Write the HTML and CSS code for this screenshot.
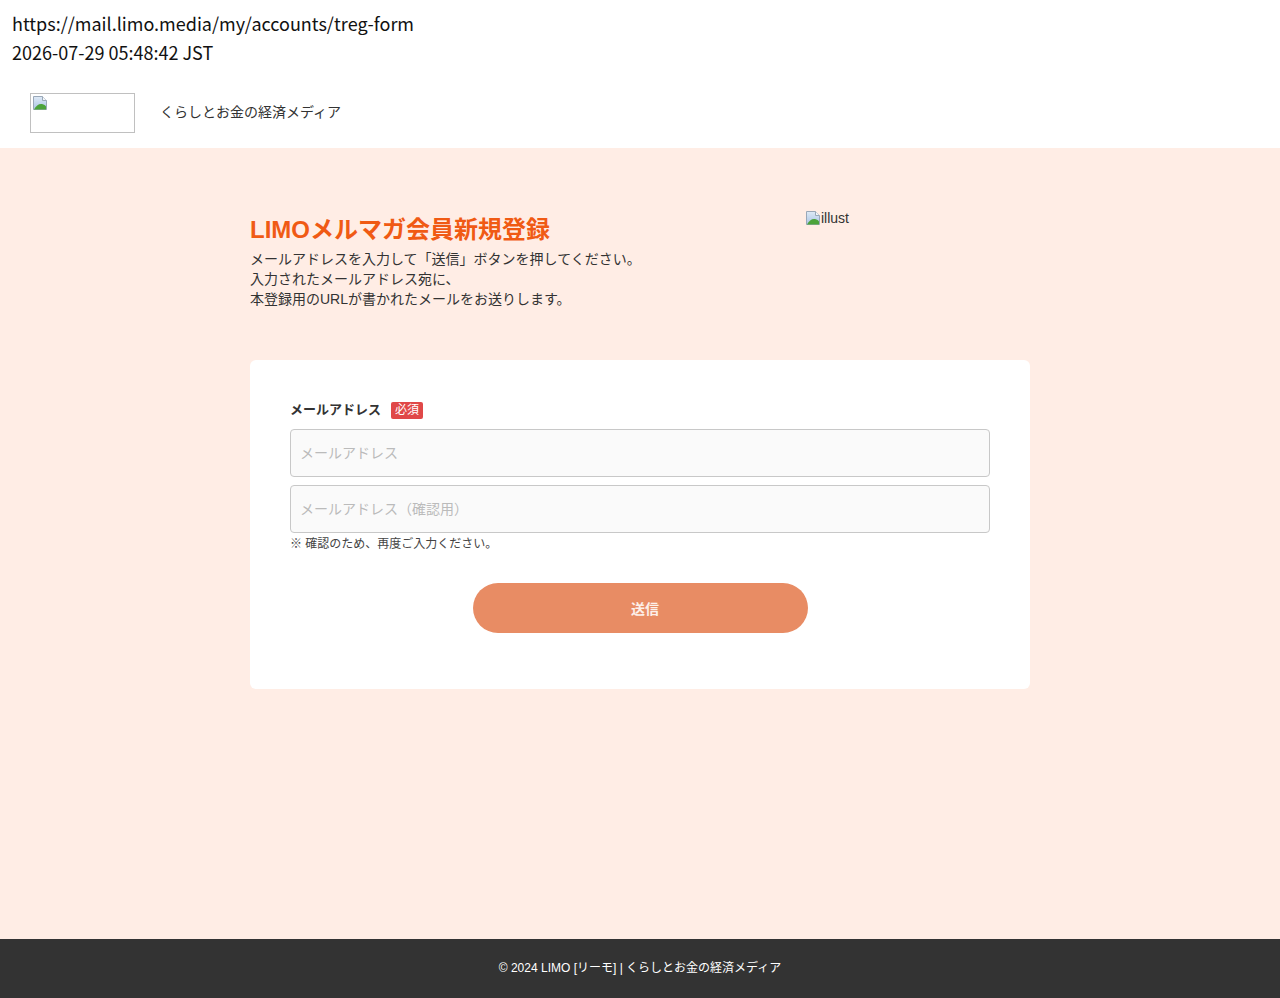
FILE: index.html
```html
<!DOCTYPE html>
<html lang="ja">
<head>
    <meta charset="UTF-8">
    <meta name="viewport" content="width=device-width, initial-scale=1.0">
    <title>LIMOメルマガ会員新規登録</title>
    <link rel="stylesheet" href="styles.css">
</head>
<body>
    <div class="capture-info">
        <div>https://mail.limo.media/my/accounts/treg-form</div>
        <div>2026-07-29 05:48:42 JST</div>
    </div>

    <header class="site-header">
        <div class="logo-box">
            <svg class="broken-img" width="16" height="16" viewBox="0 0 16 16">
                <defs>
                    <linearGradient id="sky" x1="0" y1="0" x2="0" y2="1">
                        <stop offset="0" stop-color="#dfeaf6"/>
                        <stop offset="1" stop-color="#a9c4e4"/>
                    </linearGradient>
                </defs>
                <path d="M1.5 1.5h9l4 4v9h-13z" fill="url(#sky)" stroke="#9aa8b8"/>
                <path d="M10.5 1.5v4h4" fill="#f4f6f8" stroke="#9aa8b8"/>
                <path d="M2 14.5c2-4 5-6 8-5.5 2 .3 3.5 1.5 4 2.5v3z" fill="#4ca33a"/>
            </svg>
        </div>
        <span class="tagline">くらしとお金の経済メディア</span>
    </header>

    <main class="main">
        <div class="container">
            <div class="intro">
                <div class="intro-text">
                    <h1 class="page-title">LIMOメルマガ会員新規登録</h1>
                    <p class="lead">メールアドレスを入力して「送信」ボタンを押してください。<br>入力されたメールアドレス宛に、<br>本登録用のURLが書かれたメールをお送りします。</p>
                </div>
                <div class="illust">
                    <svg class="broken-img" width="16" height="16" viewBox="0 0 16 16">
                        <path d="M1.5 1.5h9l4 4v9h-13z" fill="url(#sky)" stroke="#9aa8b8"/>
                        <path d="M10.5 1.5v4h4" fill="#f4f6f8" stroke="#9aa8b8"/>
                        <path d="M2 14.5c2-4 5-6 8-5.5 2 .3 3.5 1.5 4 2.5v3z" fill="#4ca33a"/>
                    </svg>
                    <span>illust</span>
                </div>
            </div>

            <form class="form-card" onsubmit="return false;">
                <div class="field-label">
                    メールアドレス
                    <span class="required">必須</span>
                </div>
                <input type="text" class="text-input" placeholder="メールアドレス">
                <input type="text" class="text-input" placeholder="メールアドレス（確認用）">
                <p class="note">※ 確認のため、再度ご入力ください。</p>
                <div class="actions">
                    <button type="submit" class="submit-btn">送信</button>
                </div>
            </form>
        </div>
    </main>

    <footer class="site-footer">
        © 2024 LIMO [リーモ] | くらしとお金の経済メディア
    </footer>
</body>
</html>
```

FILE: styles.css
```css
html, body {
    margin: 0;
    padding: 0;
}
body {
    font-family: "Liberation Sans", Arial, "Noto Sans CJK JP", sans-serif;
    color: #333;
    min-height: 100vh;
    display: flex;
    flex-direction: column;
}
.capture-info {
    font-family: "Noto Sans CJK JP", sans-serif;
    font-size: 18px;
    color: #111;
    padding: 9px 12px 11px;
    height: 58px;
    line-height: 29px;
    background-color: #fff;
}
.site-header {
    display: flex;
    align-items: center;
    gap: 25px;
    height: 70px;
    padding: 0 30px;
    background-color: #fff;
    box-sizing: border-box;
}
.logo-box {
    width: 105px;
    height: 40px;
    border: 1px solid #c0c0c0;
    box-sizing: border-box;
    padding: 1px;
}
.broken-img {
    display: block;
}
.tagline {
    font-size: 14px;
    color: #333;
    padding-bottom: 4px;
}
.main {
    flex: 1;
    background-color: #ffede5;
    padding-top: 66px;
}
.container {
    width: 780px;
    margin: 0 auto;
}
.intro {
    display: flex;
    justify-content: space-between;
}
.page-title {
    margin: 0;
    font-size: 24px;
    line-height: 32px;
    font-weight: bold;
    color: #f05a14;
}
.lead {
    margin: 3px 0 0;
    font-size: 14px;
    line-height: 20px;
    color: #333;
}
.illust {
    width: 225px;
    margin-top: -4px;
    display: flex;
    align-items: flex-start;
    font-size: 14px;
    line-height: 16px;
    color: #333;
}
.form-card {
    margin-top: 51px;
    background-color: #fff;
    border-radius: 6px;
    padding: 40px 40px 56px;
}
.field-label {
    display: flex;
    align-items: center;
    gap: 10px;
    font-size: 13px;
    font-weight: bold;
    line-height: 20px;
    color: #333;
}
.required {
    font-size: 12px;
    font-weight: normal;
    line-height: 17px;
    color: #fff;
    background-color: #e04848;
    padding: 0 4px;
    border-radius: 2px;
}
.text-input {
    display: block;
    width: 100%;
    height: 48px;
    box-sizing: border-box;
    margin-top: 9px;
    padding: 0 9px;
    font-family: inherit;
    font-size: 14px;
    background-color: #fafafa;
    border: 1px solid #c8c8c8;
    border-radius: 4px;
}
.text-input + .text-input {
    margin-top: 8px;
}
.text-input::placeholder {
    color: #bbb;
}
.note {
    margin: 2px 0 0;
    font-size: 12px;
    line-height: 18px;
    color: #444;
}
.actions {
    display: flex;
    justify-content: center;
    margin-top: 30px;
}
.submit-btn {
    width: 335px;
    height: 50px;
    padding: 0 0 0 10px;
    border: none;
    border-radius: 25px;
    background-color: #e88c64;
    color: #fdf0ea;
    font-family: inherit;
    font-size: 14px;
    font-weight: bold;
    cursor: pointer;
}
.site-footer {
    height: 59px;
    padding-bottom: 4px;
    box-sizing: border-box;
    display: flex;
    align-items: center;
    justify-content: center;
    background-color: #333;
    color: #fff;
    font-size: 12px;
}
```
